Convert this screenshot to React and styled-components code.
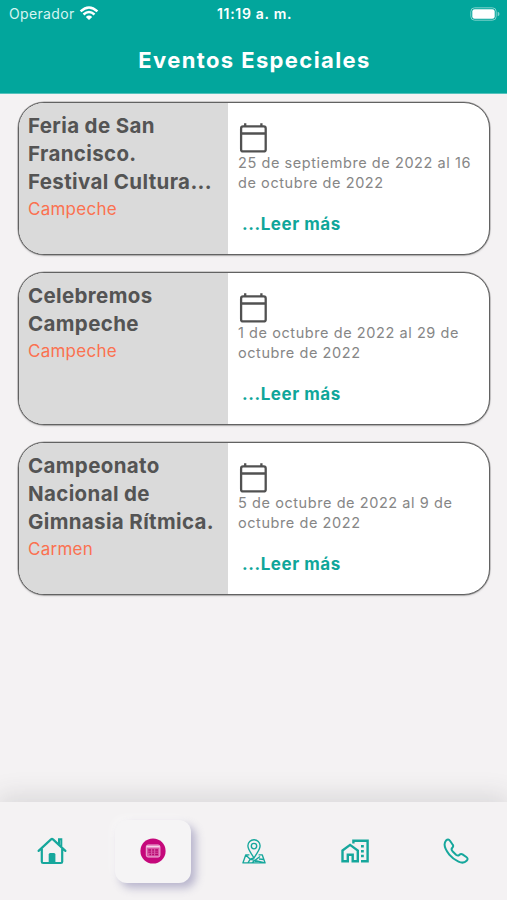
import React from "react"
import styled, { createGlobalStyle } from "styled-components"

const GlobalStyle = createGlobalStyle`
  * {
    box-sizing: border-box;
  }

  body {
    margin: 0;
    background: #f4f2f3;
    font-family: Inter, "Liberation Sans", sans-serif;
  }
`

const Screen = styled.div`
  display: flex;
  flex-direction: column;
  width: 507px;
  height: 900px;
  overflow: hidden;
  background: #f4f2f3;
`

const Header = styled.header`
  height: 94px;
  background: #02a69c;
  border-bottom: 1px solid #55c2bc;
  color: #fff;
`

const StatusBar = styled.div`
  display: grid;
  grid-template-columns: 1fr auto 1fr;
  align-items: center;
  height: 27px;
  padding: 0 7px 0 9px;
`

const Carrier = styled.div`
  display: flex;
  align-items: center;
  gap: 4px;
  color: #d5f5f2;
  font-size: 14px;
  line-height: 27px;
  letter-spacing: 0.35px;
`

const Clock = styled.div`
  font-size: 14px;
  font-weight: 600;
  letter-spacing: 0.7px;
`

const Battery = styled.svg`
  justify-self: end;
`

const Title = styled.h1`
  margin: 0;
  padding-left: 2px;
  font-size: 22px;
  font-weight: 700;
  line-height: 66px;
  letter-spacing: 1.38px;
  text-align: center;
`

const EventList = styled.main`
  display: flex;
  flex: 1;
  flex-direction: column;
  gap: 17px;
  padding: 8px 17px 0 18px;
`

const Card = styled.article`
  display: flex;
  height: 153px;
  overflow: hidden;
  border: 1px solid #626262;
  border-radius: 26px;
  background: #fff;
  box-shadow: 0 0 0 0.5px rgba(90, 90, 90, 0.5), 0 1px 2px rgba(0, 0, 0, 0.2);
`

const Summary = styled.div`
  width: 209px;
  padding: 9px 0 0 9px;
  background: #dadada;
`

const EventName = styled.h2`
  margin: 0;
  color: #545454;
  font-size: 20.5px;
  font-weight: 700;
  line-height: 28px;
  letter-spacing: 0.36px;
  white-space: pre-line;
`

const City = styled.div`
  color: #fb7150;
  font-size: 17px;
  line-height: 26px;
  letter-spacing: 0.25px;
`

const Details = styled.div`
  flex: 1;
  padding: 19px 0 0 10px;
`

const CalendarIcon = styled.svg`
  display: block;
  margin-left: 1px;
`

const Dates = styled.div`
  color: #868686;
  font-size: 14.5px;
  line-height: 19.5px;
  letter-spacing: 0.57px;
  white-space: pre-line;
`

const ReadMore = styled.a`
  display: block;
  margin: 21px 0 0 4px;
  color: #0fa69a;
  font-size: 17px;
  font-weight: 700;
  line-height: 22px;
  letter-spacing: 0.55px;
`

const TabBar = styled.nav`
  display: grid;
  grid-template-columns: repeat(5, 1fr);
  align-items: center;
  height: 98px;
  padding-left: 1px;
  background: #f4f2f3;
  box-shadow: 0 -4px 24px 2px rgba(60, 55, 65, 0.14);
`

const Tab = styled.a`
  display: flex;
  align-items: center;
  justify-content: center;
  justify-self: center;
  width: 76px;
  height: 63px;
  border-radius: 12px;
  color: #16a79c;
  background: ${({ $active }) => ($active ? "#f5f4f5" : "transparent")};
  box-shadow: ${({ $active }) =>
    $active
      ? "5px 5px 9px rgba(112, 108, 160, 0.45), -3px -3px 8px rgba(255, 255, 255, 0.4)"
      : "none"};
`

const events = [
  {
    name: "Feria de San\nFrancisco.\nFestival Cultura...",
    city: "Campeche",
    dates: "25 de septiembre de 2022 al 16\nde octubre de 2022",
  },
  {
    name: "Celebremos\nCampeche",
    city: "Campeche",
    dates: "1 de octubre de 2022 al 29 de\noctubre de 2022",
  },
  {
    name: "Campeonato\nNacional de\nGimnasia Rítmica.",
    city: "Carmen",
    dates: "5 de octubre de 2022 al 9 de\noctubre de 2022",
  },
]

const Wifi = () => (
  <svg width="20" height="15" viewBox="0 0 20 15" fill="none" stroke="#fff">
    <path d="M1.6 5.4Q10-2.4 18.4 5.4" strokeWidth="2.5" />
    <path d="M4.5 8.5Q10 3.4 15.5 8.5" strokeWidth="2.4" />
    <path d="M10 14L6.8 10.9Q10 8.3 13.2 10.9Z" fill="#fff" stroke="none" />
  </svg>
)

const Calendar = () => (
  <CalendarIcon
    width="29"
    height="31"
    viewBox="0 0 29 31"
    fill="none"
    stroke="#515151"
    strokeWidth="2.3"
  >
    <rect x="2.1" y="4.4" width="24.6" height="25" rx="2" />
    <path d="M2 11.5H27M6.2 1.3V5M22.4 1.3V5" />
  </CalendarIcon>
)

const HomeIcon = () => (
  <svg width="30" height="28" viewBox="0 0 30 28" fill="none" stroke="currentColor">
    <path
      d="M1.6 13.9L14 2.4Q15 1.6 16 2.4L28.4 13.9M4.8 12V24.7Q4.8 26 6.1 26H23.8Q25.2 26 25.2 24.7V12"
      strokeWidth="2.2"
      strokeLinecap="round"
    />
    <path d="M22 7V2.2H24.3V9.2" strokeWidth="2" />
    <path d="M11.7 26V17.5Q11.7 16 13.2 16H17Q18.4 16 18.4 17.5V26Z" fill="currentColor" stroke="none" />
  </svg>
)

const EventsIcon = () => (
  <svg width="26" height="26" viewBox="0 0 26 26">
    <circle cx="13" cy="13" r="12.6" fill="#c5087b" />
    <rect x="6.3" y="7" width="13.6" height="12" rx="1.8" fill="#d855a5" stroke="#efb5da" />
    <path d="M6.5 8.7H19.7" stroke="#f7d3e9" strokeWidth="1.6" />
    <path
      d="M8.3 12H11M12.2 12H14M15.2 12H18M8.3 14.2H11M12.2 14.2H14M15.2 14.2H18M9.5 16.5H11M12.2 16.5H14M15.2 16.5H18"
      stroke="#b5076e"
      strokeWidth="1.3"
    />
  </svg>
)

const PlacesIcon = () => (
  <svg width="24" height="25" viewBox="0 0 24 25" fill="none" stroke="currentColor" strokeWidth="1.35">
    <path d="M12 19C10 15 5.9 11 5.9 6.8A6.1 6.1 0 0 1 18.1 6.8C18.1 11 14 15 12 19Z" />
    <circle cx="12" cy="7.1" r="2.7" />
    <path d="M7.4 15.8H3.8L.9 23.9H23.1L20.2 15.8H16.6M3.8 16L8.2 20.2L6 23.8M8.2 20.2L11.8 19M8.5 20.3L23 23.8M10 23.8L18 17.5M17 20L22 20.5" strokeLinejoin="round" />
  </svg>
)

const LodgingIcon = () => (
  <svg width="28" height="24" viewBox="0 0 28 24" fill="none" stroke="currentColor" strokeWidth="2.4">
    <path d="M1.5 11.5L9.1 5.9L16.8 11.5V22.2H11.7V15.7H6.8V22.2H1.5Z" />
    <path d="M12.4 4.6V1.8H26.6V22.2H20" />
    <path d="M20 7.3H22.8M20 12.2H22.8M20 17.1H22.8" strokeWidth="2.5" />
  </svg>
)

const PhoneIcon = () => (
  <svg width="26" height="26" viewBox="0 0 26 26" fill="none" stroke="currentColor" strokeWidth="2">
    <path
      d="M3 2.6Q5.3.5 7 2.8L9.7 6.7Q10.8 8.2 9.3 9.7Q7.8 11.2 9.5 13.2L13 16.7Q15 18.3 16.2 17Q17.9 15.3 19.5 16.4L23.3 19Q25.7 20.6 23.6 22.8Q20.6 26 15.5 23.6Q9.7 20.8 6.3 16.6Q-1 7.4 3 2.6Z"
      strokeLinejoin="round"
    />
  </svg>
)

const tabs = [
  { id: "home", icon: HomeIcon },
  { id: "events", icon: EventsIcon },
  { id: "places", icon: PlacesIcon },
  { id: "lodging", icon: LodgingIcon },
  { id: "contact", icon: PhoneIcon },
]

const EventCard = ({ event }) => (
  <Card>
    <Summary>
      <EventName>{event.name}</EventName>
      <City>{event.city}</City>
    </Summary>
    <Details>
      <Calendar />
      <Dates>{event.dates}</Dates>
      <ReadMore>...Leer más</ReadMore>
    </Details>
  </Card>
)

const App = () => (
  <>
    <GlobalStyle />
    <Screen>
      <Header>
        <StatusBar>
          <Carrier>
            Operador
            <Wifi />
          </Carrier>
          <Clock>11:19 a. m.</Clock>
          <Battery width="30" height="14" viewBox="0 0 30 14">
            <rect x=".8" y=".8" width="25.4" height="12.4" rx="3.8" fill="none" stroke="#7fd2cc" />
            <rect x="2.3" y="2.3" width="22.4" height="9.4" rx="2.3" fill="#fff" />
            <path d="M27.7 4.7Q29.5 5.3 29.5 7T27.7 9.3Z" fill="#7fd2cc" />
          </Battery>
        </StatusBar>
        <Title>Eventos Especiales</Title>
      </Header>
      <EventList>
        {events.map((event) => (
          <EventCard key={event.name} event={event} />
        ))}
      </EventList>
      <TabBar>
        {tabs.map(({ id, icon: Icon }) => (
          <Tab key={id} $active={id === "events"}>
            <Icon />
          </Tab>
        ))}
      </TabBar>
    </Screen>
  </>
)

export default App
